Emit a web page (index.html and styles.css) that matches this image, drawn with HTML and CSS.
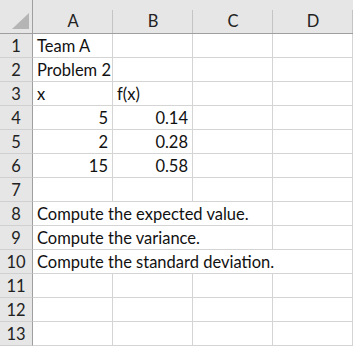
FILE: index.html
```html
<!DOCTYPE html>
<html lang="en">
<head>
  <meta charset="UTF-8">
  <title>Sheet1</title>
  <link rel="stylesheet" href="styles.css">
</head>
<body>
  <div class="sheet">
    <div class="corner">
      <svg width="17" height="16" viewBox="0 0 17 16"><polygon points="17,0 17,16 0,16" fill="#b5b5b5"/></svg>
    </div>
    <div class="colhead">A</div>
    <div class="colhead">B</div>
    <div class="colhead">C</div>
    <div class="colhead">D</div>

    <div class="rowhead">1</div>
    <div class="cell">Team A</div><div class="cell"></div><div class="cell"></div><div class="cell"></div>

    <div class="rowhead">2</div>
    <div class="cell">Problem 2</div><div class="cell"></div><div class="cell"></div><div class="cell"></div>

    <div class="rowhead">3</div>
    <div class="cell">x</div><div class="cell">f(x)</div><div class="cell"></div><div class="cell"></div>

    <div class="rowhead">4</div>
    <div class="cell num">5</div><div class="cell num">0.14</div><div class="cell"></div><div class="cell"></div>

    <div class="rowhead">5</div>
    <div class="cell num">2</div><div class="cell num">0.28</div><div class="cell"></div><div class="cell"></div>

    <div class="rowhead">6</div>
    <div class="cell num">15</div><div class="cell num">0.58</div><div class="cell"></div><div class="cell"></div>

    <div class="rowhead">7</div>
    <div class="cell"></div><div class="cell"></div><div class="cell"></div><div class="cell"></div>

    <div class="rowhead">8</div>
    <div class="cell span3">Compute the expected value.</div><div class="cell"></div>

    <div class="rowhead">9</div>
    <div class="cell span3">Compute the variance.</div><div class="cell"></div>

    <div class="rowhead">10</div>
    <div class="cell span4">Compute the standard deviation.</div>

    <div class="rowhead">11</div>
    <div class="cell"></div><div class="cell"></div><div class="cell"></div><div class="cell"></div>

    <div class="rowhead">12</div>
    <div class="cell"></div><div class="cell"></div><div class="cell"></div><div class="cell"></div>

    <div class="rowhead">13</div>
    <div class="cell"></div><div class="cell"></div><div class="cell"></div><div class="cell"></div>
  </div>
</body>
</html>
```

FILE: styles.css
```css
* {
  margin: 0; padding: 0; box-sizing: border-box;
}
body {
  background: #ffffff;
  font-family: 'Lato', 'Liberation Sans', sans-serif;
  font-size: 16.5px;
  color: #111;
}
.sheet {
  display: grid;
  grid-template-columns: 33px 80px 80px 80px 80px;
  grid-template-rows: 34px repeat(13, 24px);
  width: 355px;
}
.corner {
  background: #e6e6e6;
  border-bottom: 1px solid #9f9f9f;
  border-right: 1px solid #9f9f9f;
  display: flex;
  align-items: flex-end;
  justify-content: flex-end;
  padding: 0 3px 4px 0;
}
.corner svg { display: block; }
.colhead {
  background: #e6e6e6 linear-gradient(#c4c4c4, #c4c4c4) right bottom / 1px 23px no-repeat;
  border-bottom: 1px solid #9f9f9f;
  display: flex;
  align-items: center;
  justify-content: center;
  padding-top: 9px;
  color: #222;
}
.rowhead {
  background: #e6e6e6;
  border-right: 1px solid #9f9f9f;
  border-bottom: 1px solid #d0d0d0;
  display: flex;
  align-items: center;
  justify-content: center;
  color: #222;
}
.cell {
  border-right: 1px solid #d4d4d4;
  border-bottom: 1px solid #d4d4d4;
  display: flex;
  align-items: center;
  padding: 0 4px;
  white-space: nowrap;
}
.num { justify-content: flex-end; }
.span3 { grid-column: span 3; }
.span4 { grid-column: span 4; }
```
